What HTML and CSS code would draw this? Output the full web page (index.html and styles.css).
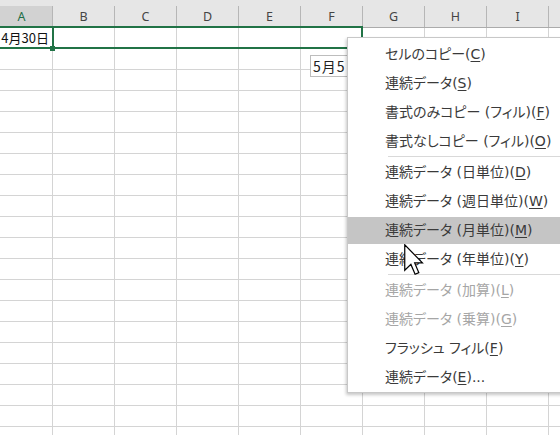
FILE: index.html
```html
<!DOCTYPE html>
<html lang="ja">
<head>
<meta charset="utf-8">
<title>Fill menu</title>
<link rel="stylesheet" href="styles.css">
</head>
<body>
<div class="sheet">
  <div class="cols">
    <div class="ch sel">A</div><div class="ch">B</div><div class="ch">C</div><div class="ch">D</div><div class="ch">E</div><div class="ch">F</div><div class="ch">G</div><div class="ch">H</div><div class="ch">I</div><div class="ch"></div>
  </div>
  <div class="grid">
    <div class="c date">4月30日</div><div class="c"></div><div class="c"></div><div class="c"></div><div class="c"></div><div class="c"></div><div class="c"></div><div class="c"></div><div class="c"></div><div class="c"></div>
    <div class="c"></div><div class="c"></div><div class="c"></div><div class="c"></div><div class="c"></div><div class="c"></div><div class="c"></div><div class="c"></div><div class="c"></div><div class="c"></div>
    <div class="c"></div><div class="c"></div><div class="c"></div><div class="c"></div><div class="c"></div><div class="c"></div><div class="c"></div><div class="c"></div><div class="c"></div><div class="c"></div>
    <div class="c"></div><div class="c"></div><div class="c"></div><div class="c"></div><div class="c"></div><div class="c"></div><div class="c"></div><div class="c"></div><div class="c"></div><div class="c"></div>
    <div class="c"></div><div class="c"></div><div class="c"></div><div class="c"></div><div class="c"></div><div class="c"></div><div class="c"></div><div class="c"></div><div class="c"></div><div class="c"></div>
    <div class="c"></div><div class="c"></div><div class="c"></div><div class="c"></div><div class="c"></div><div class="c"></div><div class="c"></div><div class="c"></div><div class="c"></div><div class="c"></div>
    <div class="c"></div><div class="c"></div><div class="c"></div><div class="c"></div><div class="c"></div><div class="c"></div><div class="c"></div><div class="c"></div><div class="c"></div><div class="c"></div>
    <div class="c"></div><div class="c"></div><div class="c"></div><div class="c"></div><div class="c"></div><div class="c"></div><div class="c"></div><div class="c"></div><div class="c"></div><div class="c"></div>
    <div class="c"></div><div class="c"></div><div class="c"></div><div class="c"></div><div class="c"></div><div class="c"></div><div class="c"></div><div class="c"></div><div class="c"></div><div class="c"></div>
    <div class="c"></div><div class="c"></div><div class="c"></div><div class="c"></div><div class="c"></div><div class="c"></div><div class="c"></div><div class="c"></div><div class="c"></div><div class="c"></div>
    <div class="c"></div><div class="c"></div><div class="c"></div><div class="c"></div><div class="c"></div><div class="c"></div><div class="c"></div><div class="c"></div><div class="c"></div><div class="c"></div>
    <div class="c"></div><div class="c"></div><div class="c"></div><div class="c"></div><div class="c"></div><div class="c"></div><div class="c"></div><div class="c"></div><div class="c"></div><div class="c"></div>
    <div class="c"></div><div class="c"></div><div class="c"></div><div class="c"></div><div class="c"></div><div class="c"></div><div class="c"></div><div class="c"></div><div class="c"></div><div class="c"></div>
    <div class="c"></div><div class="c"></div><div class="c"></div><div class="c"></div><div class="c"></div><div class="c"></div><div class="c"></div><div class="c"></div><div class="c"></div><div class="c"></div>
    <div class="c"></div><div class="c"></div><div class="c"></div><div class="c"></div><div class="c"></div><div class="c"></div><div class="c"></div><div class="c"></div><div class="c"></div><div class="c"></div>
    <div class="c"></div><div class="c"></div><div class="c"></div><div class="c"></div><div class="c"></div><div class="c"></div><div class="c"></div><div class="c"></div><div class="c"></div><div class="c"></div>
    <div class="c"></div><div class="c"></div><div class="c"></div><div class="c"></div><div class="c"></div><div class="c"></div><div class="c"></div><div class="c"></div><div class="c"></div><div class="c"></div>
    <div class="c"></div><div class="c"></div><div class="c"></div><div class="c"></div><div class="c"></div><div class="c"></div><div class="c"></div><div class="c"></div><div class="c"></div><div class="c"></div>
    <div class="c"></div><div class="c"></div><div class="c"></div><div class="c"></div><div class="c"></div><div class="c"></div><div class="c"></div><div class="c"></div><div class="c"></div><div class="c"></div>
    <div class="c"></div><div class="c"></div><div class="c"></div><div class="c"></div><div class="c"></div><div class="c"></div><div class="c"></div><div class="c"></div><div class="c"></div><div class="c"></div>
  </div>

  <div class="range"></div>
  <div class="active-edge"></div>
  <div class="handle"></div>
  <div class="tip">5月5日</div>

  <div class="menu">
    <div class="item">セルのコピー(<u>C</u>)</div>
    <div class="item">連続データ(<u>S</u>)</div>
    <div class="item">書式のみコピー (フィル)(<u>F</u>)</div>
    <div class="item">書式なしコピー (フィル)(<u>O</u>)</div>
    <div class="sep"></div>
    <div class="item">連続データ (日単位)(<u>D</u>)</div>
    <div class="item">連続データ (週日単位)(<u>W</u>)</div>
    <div class="item hot">連続データ (月単位)(<u>M</u>)</div>
    <div class="item">連続データ (年単位)(<u>Y</u>)</div>
    <div class="sep"></div>
    <div class="item off">連続データ (加算)(<u>L</u>)</div>
    <div class="item off">連続データ (乗算)(<u>G</u>)</div>
    <div class="item">フラッシュ フィル(<u>F</u>)</div>
    <div class="item">連続データ(<u>E</u>)...</div>
  </div>

  <svg class="cursor" viewBox="0 0 13 21" width="19.5" height="31.5">
    <path d="M0.5 0.5 V17.5 L4.6 13.6 L7.4 20.2 L9.9 19.1 L7.1 12.6 H12.3 Z" fill="#fff" stroke="#000" stroke-width="0.8" stroke-linejoin="miter"/>
  </svg>
</div>
</body>
</html>
```

FILE: styles.css
```css
html, body {
  margin: 0;
  padding: 0;
  width: 560px;
  height: 435px;
  overflow: hidden;
  background: #fff;
}

.sheet {
  position: relative;
  width: 560px;
  height: 435px;
  overflow: hidden;
  font-family: "Noto Sans CJK JP", "Noto Sans", sans-serif;
}

.cols {
  display: grid;
  grid-template-columns: repeat(10, 62px);
  margin-left: -9px;
  width: 640px;
  padding-top: 6px;
  background: #e6e6e6;
  border-bottom: 1px solid #ababab;
}

.ch {
  height: 21px;
  box-sizing: border-box;
  border-right: 1px solid #b6b6b6;
  text-align: center;
  line-height: 21px;
  font-family: "Noto Sans", sans-serif;
  font-size: 12.5px;
  color: #444;
}

.ch.sel {
  background: #d2d2d2;
  color: #1f6f47;
}

.grid {
  display: grid;
  grid-template-columns: repeat(10, 62px);
  grid-auto-rows: 21px;
  margin-left: -9px;
}

.c {
  box-sizing: border-box;
  border-right: 1px solid #d4d4d4;
  border-bottom: 1px solid #d4d4d4;
}

.date {
  text-align: right;
  padding-right: 3px;
  font-size: 13px;
  line-height: 20px;
  color: #111;
  white-space: nowrap;
}

.range {
  position: absolute;
  left: -3px;
  top: 26px;
  width: 366px;
  height: 23px;
  box-sizing: border-box;
  border: 2px solid #217346;
}

.active-edge {
  position: absolute;
  left: 52px;
  top: 26px;
  width: 2px;
  height: 23px;
  background: #217346;
}

.handle {
  position: absolute;
  left: 50px;
  top: 46px;
  width: 5px;
  height: 5px;
  background: #217346;
}

.tip {
  position: absolute;
  left: 310px;
  top: 55px;
  width: 60px;
  height: 22px;
  box-sizing: border-box;
  border: 1px solid #bdbdbd;
  background: #fff;
  padding-left: 2px;
  font-size: 14px;
  letter-spacing: 1px;
  line-height: 20px;
  color: #222;
  white-space: nowrap;
}

.menu {
  position: absolute;
  left: 347px;
  top: 37px;
  width: 250px;
  padding-top: 1px;
  background: #fff;
  border: 1px solid #c8c8c8;
  box-shadow: -1px 2px 3px rgba(0, 0, 0, 0.22);
  font-family: "DejaVu Sans", "Noto Sans CJK JP", sans-serif;
  font-size: 14px;
  color: #3a3a3a;
  font-feature-settings: "palt";
}

.item {
  height: 27px;
  margin: 2px 0 1px;
  padding-left: 37px;
  line-height: 27px;
  white-space: nowrap;
}

.item u {
  text-decoration-thickness: 1px;
  text-underline-offset: 2px;
}

.item.hot {
  background: #c5c5c5;
}

.item.off {
  color: #a6a6a6;
}

.sep {
  height: 1px;
  margin: 0 0 1px 40px;
  background: #d9d9d9;
}

.cursor {
  position: absolute;
  left: 404px;
  top: 244px;
}
```
